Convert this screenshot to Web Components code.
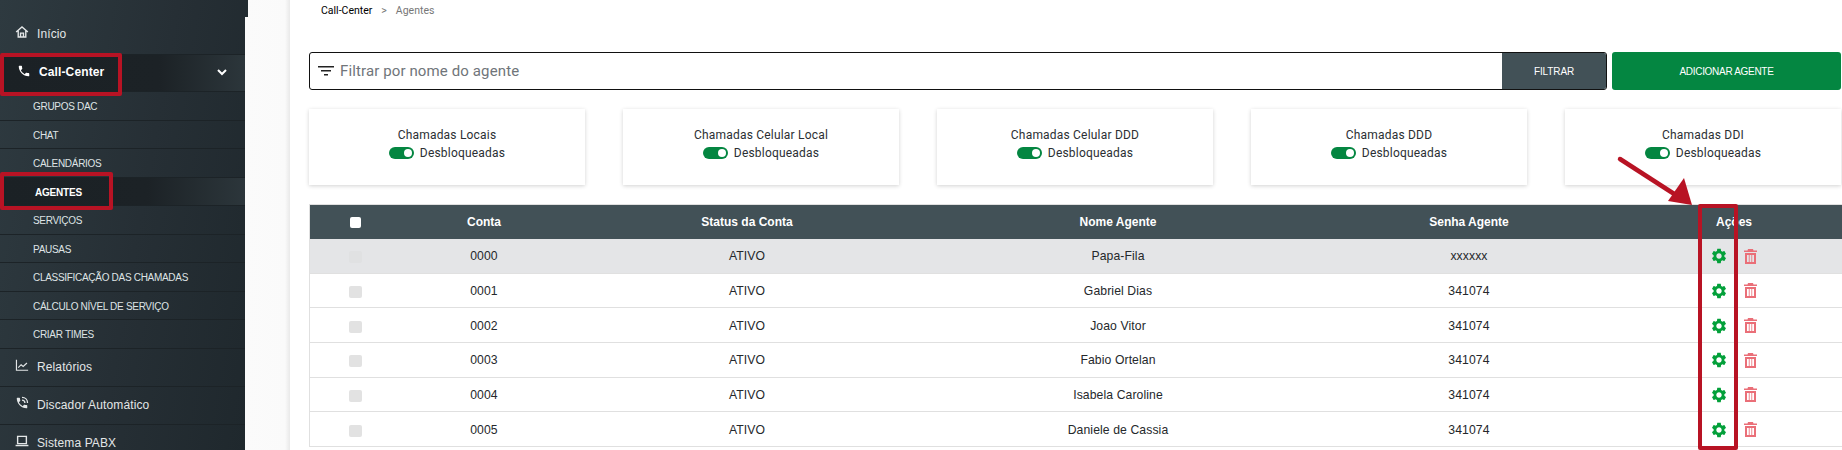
<!DOCTYPE html>
<html lang="pt-BR">
<head>
<meta charset="utf-8">
<title>Agentes</title>
<style>
  html, body { margin: 0; height: 450px; overflow: hidden; background: #fff; }
  body { font-family: "Liberation Sans", Arial, sans-serif; }
  app-shell { height: 450px; }
</style>
</head>
<body>
<app-shell>
  <app-sidebar slot="side">
    <nav-item icon="home" first>Início</nav-item>
    <nav-item icon="phone" active chevron>Call-Center</nav-item>
    <sub-item>GRUPOS DAC</sub-item>
    <sub-item>CHAT</sub-item>
    <sub-item>CALENDÁRIOS</sub-item>
    <sub-item active>AGENTES</sub-item>
    <sub-item>SERVIÇOS</sub-item>
    <sub-item>PAUSAS</sub-item>
    <sub-item>CLASSIFICAÇÃO DAS CHAMADAS</sub-item>
    <sub-item>CÁLCULO NÍVEL DE SERVIÇO</sub-item>
    <sub-item>CRIAR TIMES</sub-item>
    <nav-item icon="chart">Relatórios</nav-item>
    <nav-item icon="dialer">Discador Automático</nav-item>
    <nav-item icon="laptop">Sistema PABX</nav-item>
  </app-sidebar>

  <page-crumbs root="Call-Center" current="Agentes"></page-crumbs>
  <filter-bar placeholder="Filtrar por nome do agente" action="FILTRAR" add="ADICIONAR AGENTE"></filter-bar>
  <card-row>
    <toggle-card>Chamadas Locais</toggle-card>
    <toggle-card>Chamadas Celular Local</toggle-card>
    <toggle-card>Chamadas Celular DDD</toggle-card>
    <toggle-card>Chamadas DDD</toggle-card>
    <toggle-card>Chamadas DDI</toggle-card>
  </card-row>
  <agents-table>
    <agent-row conta="0000" status="ATIVO" nome="Papa-Fila" senha="xxxxxx" shaded></agent-row>
    <agent-row conta="0001" status="ATIVO" nome="Gabriel Dias" senha="341074"></agent-row>
    <agent-row conta="0002" status="ATIVO" nome="Joao Vitor" senha="341074"></agent-row>
    <agent-row conta="0003" status="ATIVO" nome="Fabio Ortelan" senha="341074"></agent-row>
    <agent-row conta="0004" status="ATIVO" nome="Isabela Caroline" senha="341074"></agent-row>
    <agent-row conta="0005" status="ATIVO" nome="Daniele de Cassia" senha="341074"></agent-row>
  </agents-table>

  <red-box slot="marks" style="left:0;top:53px;width:122px;height:43px"></red-box>
  <red-box slot="marks" style="left:0;top:172px;width:113px;height:38px"></red-box>
  <red-box slot="marks" style="left:1698px;top:204px;width:40px;height:246px"></red-box>
  <red-arrow slot="marks"></red-arrow>
</app-shell>

<script>
const ICONS = {
  home: '<path fill="none" stroke="currentColor" stroke-width="2.4" d="M2 12 12 3.500 22 12M5.500 9.500V20.500h13V9.500"/><path fill="none" stroke="currentColor" stroke-width="2.400" d="M9.500 20.500v-6.500h5v6.500"/>',
  phone: '<path fill="currentColor" d="M6.62 10.79c1.44 2.83 3.76 5.14 6.59 6.59l2.2-2.2c.27-.27.67-.36 1.02-.24 1.12.37 2.33.57 3.57.57.55 0 1 .45 1 1V20c0 .55-.45 1-1 1-9.39 0-17-7.61-17-17 0-.55.45-1 1-1h3.5c.55 0 1 .45 1 1 0 1.25.2 2.45.57 3.57.11.35.03.74-.25 1.02l-2.2 2.2z"/>',
  chart: '<path fill="none" stroke="currentColor" stroke-width="2" d="M2.500 3v18h20"/><path fill="none" stroke="currentColor" stroke-width="2" d="M5.500 16.500l5-5 3.500 3 6.500-6"/>',
  dialer: '<path fill="currentColor" d="M6.62 10.79c1.44 2.83 3.76 5.14 6.59 6.59l2.2-2.2c.27-.27.67-.36 1.02-.24 1.12.37 2.33.57 3.57.57.55 0 1 .45 1 1V20c0 .55-.45 1-1 1-9.39 0-17-7.61-17-17 0-.55.45-1 1-1h3.500c.55 0 1 .45 1 1 0 1.25.2 2.45.57 3.57.11.35.03.74-.25 1.02l-2.2 2.2z"/><path fill="none" stroke="currentColor" stroke-width="2.200" d="M12 7c3 0 5 2 5 5M12 2.500c5.500 0 9.500 4 9.500 9.500"/>',
  laptop: '<path fill="none" stroke="currentColor" stroke-width="2.400" d="M4.500 4h15v12.500h-15z"/><path fill="currentColor" d="M1 18.500h22v2.500H1z"/>'
};

class AppShell extends HTMLElement {
  constructor() {
    super();
    this.attachShadow({ mode: "open" }).innerHTML = `
      <style>
        :host { display: grid; grid-template-columns: 245px 45px 1fr; position: relative; overflow: hidden; }
        .gutter { background: linear-gradient(90deg, #fbfbfb 0, #fafafa 40px, #e9e9e9 45px); position: relative; }
        .gutter::before { content: ""; position: absolute; left: 0; top: 0; width: 3px; height: 17px; background: #222c31; }
        main { padding-left: 19px; min-width: 0; display: block; }
      </style>
      <slot name="side"></slot>
      <div class="gutter"></div>
      <main><slot></slot></main>
      <slot name="marks"></slot>`;
  }
}

class AppSidebar extends HTMLElement {
  constructor() {
    super();
    this.attachShadow({ mode: "open" }).innerHTML = `
      <style>
        :host { display: flex; flex-direction: column; height: 450px; overflow: hidden;
          background: linear-gradient(100deg, #2e3a40 0%, #262f35 55%, #1f282d 100%); }
      </style>
      <slot></slot>`;
  }
}

class NavItem extends HTMLElement {
  constructor() {
    super();
    const icon = ICONS[this.getAttribute("icon")] || "";
    const chevron = this.hasAttribute("chevron")
      ? '<svg class="chev" viewBox="0 0 10 7" width="10" height="7"><path fill="none" stroke="#fff" stroke-width="2" d="M1 1l4 4 4-4"/></svg>' : "";
    this.attachShadow({ mode: "open" }).innerHTML = `
      <style>
        :host { display: flex; align-items: center; flex: none; height: 38px; box-sizing: border-box;
          padding-left: 15px; color: #e3e6e7; font: 12px "Liberation Sans", Arial, sans-serif; letter-spacing: .12px;
          border-bottom: 1px solid #1c2327; }
        :host([first]) { height: 55px; padding-top: 14px; }
        :host([active]) { color: #fff; font-weight: 700; padding-left: 17px; height: 37px; padding-bottom: 2px;
          background: linear-gradient(90deg, #1b2125 0%, #1c2226 65%, #2c363b 100%); }
        svg.ic { width: 14px; height: 14px; margin-right: 8px; margin-top: -4px; flex: none; }
        :host([active]) svg.ic { margin-right: 8px; margin-top: -3px; }
        .chev { margin-left: auto; margin-right: 18px; }
      </style>
      <svg class="ic" viewBox="0 0 24 24">${icon}</svg><slot></slot>${chevron}`;
  }
}

class SubItem extends HTMLElement {
  constructor() {
    super();
    this.attachShadow({ mode: "open" }).innerHTML = `
      <style>
        :host { display: flex; align-items: center; flex: none; height: 28.5px; box-sizing: border-box;
          padding: 2px 0 0 33px; color: #dfe3e5; font: 10px "Liberation Sans", Arial, sans-serif; letter-spacing: -.3px;
          border-bottom: 1px solid #1c2327; }
        :host([active]) { color: #fff; font-weight: 700; padding-left: 35px; letter-spacing: -.2px;
          background: linear-gradient(90deg, #1b2125 0%, #1c2226 60%, #2c363b 100%); }
      </style>
      <slot></slot>`;
  }
}

class PageCrumbs extends HTMLElement {
  constructor() {
    super();
    this.attachShadow({ mode: "open" }).innerHTML = `
      <style>
        :host { display: flex; gap: 9px; height: 52px; box-sizing: border-box; padding: 4px 0 0 12px;
          font: 10.500px/13px Roboto, sans-serif; color: #000; }
        i { font-style: normal; color: #777; }
      </style>
      <span>${this.getAttribute("root")}</span><i>&gt;</i><i>${this.getAttribute("current")}</i>`;
  }
}

class FilterBar extends HTMLElement {
  constructor() {
    super();
    this.attachShadow({ mode: "open" }).innerHTML = `
      <style>
        :host { display: flex; gap: 5px; height: 38px; margin-right: 1px; font-family: Roboto, sans-serif; }
        .box { flex: 1; display: flex; align-items: center; border: 1px solid #111; border-radius: 3px; overflow: hidden; }
        svg { margin-left: 8px; flex: none; }
        .ph { flex: 1; margin-left: 6px; font-size: 15px; letter-spacing: .12px; color: #70757a; }
        .go { width: 104px; align-self: stretch; background: #425157; color: #fff; display: flex; align-items: center; justify-content: center;
          font: 10px "Liberation Sans", Arial, sans-serif; letter-spacing: -.1px; }
        .add { width: 229px; background: #048641; color: #fff; border-radius: 3px; display: flex; align-items: center; justify-content: center;
          font: 10px "Liberation Sans", Arial, sans-serif; letter-spacing: -.3px; }
      </style>
      <div class="box">
        <svg width="16" height="10" viewBox="0 0 16 10"><path fill="#222" d="M0 0h16v1.500H0zM3 4h10v1.500H3zM6 8h4v1.500H6z"/></svg>
        <span class="ph">${this.getAttribute("placeholder")}</span>
        <div class="go">${this.getAttribute("action")}</div>
      </div>
      <div class="add">${this.getAttribute("add")}</div>`;
  }
}

class CardRow extends HTMLElement {
  constructor() {
    super();
    this.attachShadow({ mode: "open" }).innerHTML = `
      <style>
        :host { display: grid; grid-template-columns: repeat(5, 276px); gap: 38px; margin-top: 19px; }
      </style>
      <slot></slot>`;
  }
}

class ToggleCard extends HTMLElement {
  constructor() {
    super();
    this.attachShadow({ mode: "open" }).innerHTML = `
      <style>
        :host { display: flex; flex-direction: column; align-items: center; height: 76px; box-sizing: border-box; padding-top: 17px;
          background: #fff; box-shadow: 0 1px 4px rgba(0,0,0,.18); color: #2b2f33;
          font: 12px/18px Roboto, sans-serif; letter-spacing: .2px; }
        .state { display: flex; align-items: center; gap: 6px; }
        .sw { width: 25px; height: 12px; border-radius: 6px; background: #048641; position: relative; }
        .sw::after { content: ""; position: absolute; right: 2px; top: 2px; width: 8px; height: 8px; border-radius: 50%; background: #fff; }
      </style>
      <div><slot></slot></div>
      <div class="state"><span class="sw"></span>Desbloqueadas</div>`;
  }
}

const COLS = "90px 168px 358px 384px 318px 212px";

class AgentsTable extends HTMLElement {
  constructor() {
    super();
    this.attachShadow({ mode: "open" }).innerHTML = `
      <style>
        :host { display: block; margin: 19px 0 0 0; border-top: 1px solid #e0e0e0; border-left: 1px solid #e0e0e0; }
        .head { display: grid; grid-template-columns: ${COLS} 2px; height: 34px; align-items: center; text-align: center;
          background: #425157; color: #fff; font: 700 12px "Liberation Sans", Arial, sans-serif; }
        .chk { width: 11px; height: 11px; background: #fff; border-radius: 2px; justify-self: center; }
      </style>
      <div class="head">
        <div class="chk"></div><div>Conta</div><div>Status da Conta</div><div>Nome Agente</div><div>Senha Agente</div><div>Ações</div>
      </div>
      <slot></slot>`;
  }
}

class AgentRow extends HTMLElement {
  constructor() {
    super();
    const a = n => this.getAttribute(n);
    this.attachShadow({ mode: "open" }).innerHTML = `
      <style>
        :host { display: grid; grid-template-columns: ${COLS}; height: 34.67px; box-sizing: border-box; align-items: center; text-align: center;
          padding-top: 1px; border-bottom: 1px solid #e0e0e0; color: #25282b; font: 12.2px "Liberation Sans", Arial, sans-serif; letter-spacing: .1px; }
        :host([shaded]) { background: #e4e5e7; }
        .chk { width: 13px; height: 12px; margin-top: 2px; background: #e2e2e2; border-radius: 2px; justify-self: center; }
        :host([shaded]) .chk { background: #e0e1e2; }
        .acts { display: flex; justify-content: center; align-items: center; gap: 16px; margin: 0 2px 0 0; }
      </style>
      <div class="chk"></div>
      <div>${a("conta")}</div><div>${a("status")}</div><div>${a("nome")}</div><div>${a("senha")}</div>
      <div class="acts">
        <svg width="18" height="18" viewBox="0 0 24 24"><path fill="#03a03a" d="M19.14 12.94c.04-.3.06-.61.06-.94 0-.32-.02-.64-.07-.94l2.03-1.58c.18-.14.23-.41.12-.61l-1.92-3.32c-.12-.22-.37-.29-.59-.22l-2.39.96c-.5-.38-1.03-.7-1.62-.94l-.36-2.54c-.04-.24-.24-.41-.48-.41h-3.84c-.24 0-.43.17-.47.41l-.36 2.54c-.59.24-1.13.57-1.62.94l-2.39-.96c-.22-.08-.47 0-.59.22L2.74 8.87c-.12.21-.08.47.12.61l2.03 1.58c-.05.3-.09.63-.09.94s.02.64.07.94l-2.03 1.58c-.18.14-.23.41-.12.61l1.92 3.32c.12.22.37.29.59.22l2.39-.96c.5.38 1.03.7 1.62.94l.36 2.54c.05.24.24.41.48.41h3.84c.24 0 .44-.17.47-.41l.36-2.54c.59-.24 1.13-.56 1.62-.94l2.39.96c.22.08.47 0 .59-.22l1.92-3.32c.12-.22.07-.47-.12-.61l-2.01-1.58zM12 15.6c-1.98 0-3.6-1.62-3.6-3.6s1.62-3.6 3.6-3.6 3.6 1.62 3.6 3.600-1.62 3.6-3.6 3.6z"/></svg>
        <svg width="13" height="15" viewBox="0 0 13 15"><path fill="#ea6f78" fill-rule="evenodd" d="M4 0h5l.5 1.500H13V3H0V1.500h3.500zM1 4h11v11H1zm2 2v7h1.800V6zm2.600 0v7h1.800V6zm2.600 0v7H10V6z"/></svg>
      </div>`;
  }
}

class RedBox extends HTMLElement {
  constructor() {
    super();
    this.attachShadow({ mode: "open" }).innerHTML = `
      <style>
        :host { display: block; position: absolute; box-sizing: border-box; border: 4.500px solid #b81324; border-radius: 2px; pointer-events: none; }
      </style>`;
  }
}

class RedArrow extends HTMLElement {
  constructor() {
    super();
    this.attachShadow({ mode: "open" }).innerHTML = `
      <style>
        :host { display: block; position: absolute; left: 1610px; top: 151px; width: 90px; height: 60px; }
      </style>
      <svg width="90" height="60" viewBox="0 0 90 60">
        <path fill="none" stroke="#b81324" stroke-width="4.500" stroke-linecap="round" d="M10 8 72 48"/>
        <path fill="#b81324" d="M82 54 58 50 74 27z"/>
      </svg>`;
  }
}

customElements.define("app-shell", AppShell);
customElements.define("app-sidebar", AppSidebar);
customElements.define("nav-item", NavItem);
customElements.define("sub-item", SubItem);
customElements.define("page-crumbs", PageCrumbs);
customElements.define("filter-bar", FilterBar);
customElements.define("card-row", CardRow);
customElements.define("toggle-card", ToggleCard);
customElements.define("agents-table", AgentsTable);
customElements.define("agent-row", AgentRow);
customElements.define("red-box", RedBox);
customElements.define("red-arrow", RedArrow);
</script>
</body>
</html>
